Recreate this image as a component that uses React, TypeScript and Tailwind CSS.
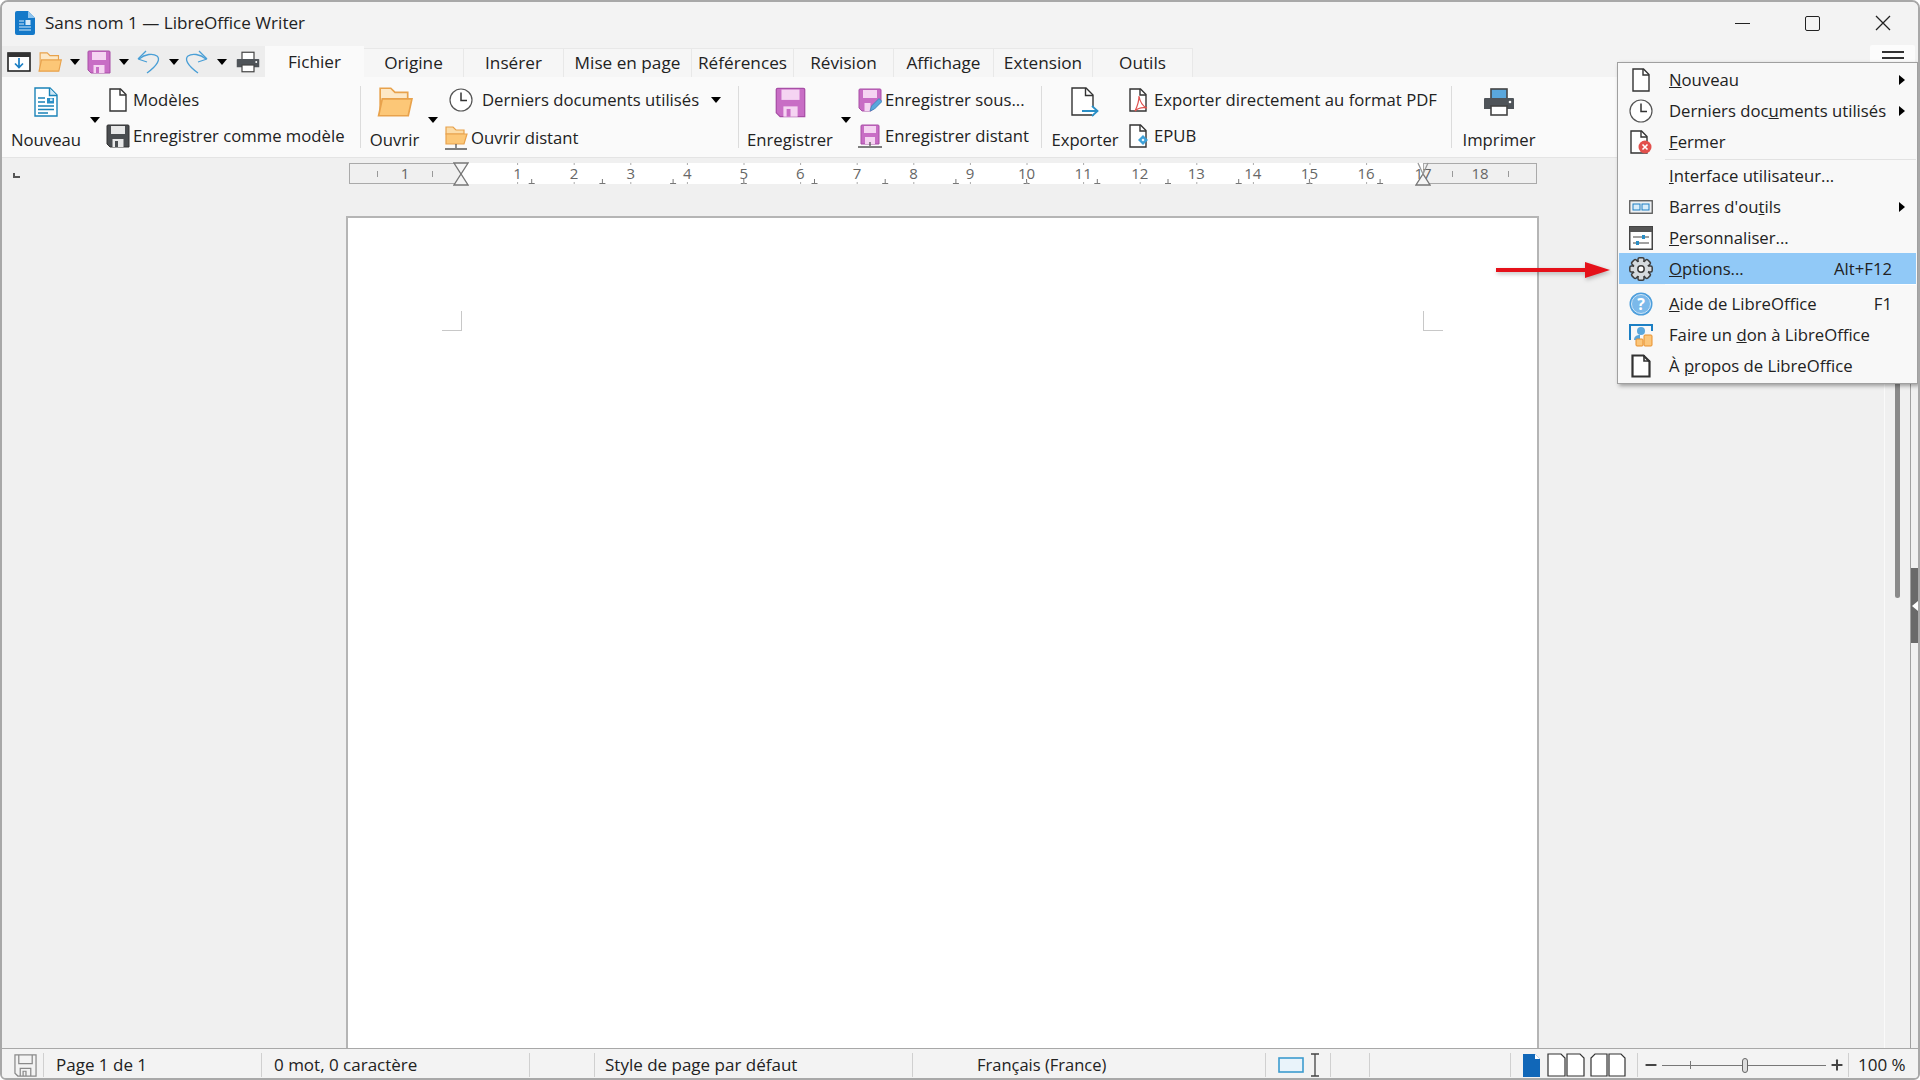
import type { ReactNode } from "react";
import { Minus, Plus } from "lucide-react";

const font = "font-['Open_Sans','Noto_Sans',sans-serif]";

// ---- icons ----

const PageIcon = ({ className = "h-6 w-[18px]", stroke = "#333" }: { className?: string; stroke?: string }) => (
  <svg viewBox="0 0 18 24" className={className} fill="none">
    <path d="M1 1h10.500L17 6.500V23H1z" fill="#fff" stroke={stroke} strokeWidth="1.4" />
    <path d="M11 1v6h6" stroke={stroke} strokeWidth="1.4" />
  </svg>
);

const WriterLogo = () => (
  <svg viewBox="0 0 20 24" className="h-6 w-5">
    <path d="M2 0h11l7 7v15a2 2 0 0 1-2 2H2a2 2 0 0 1-2-2V2a2 2 0 0 1 2-2z" fill="#1479c9" />
    <path d="M13 0l7 7h-7z" fill="#8ec4ee" />
    <path d="M4 10h5M4 13h5M4 16h12M4 19h12" stroke="#d6ebfa" strokeWidth="1.2" />
    <rect x="10.500" y="9" width="5" height="5" fill="#d6ebfa" />
  </svg>
);

const NewDocBig = () => (
  <svg viewBox="0 0 24 30" className="h-[30px] w-6" fill="none">
    <path d="M1 1h15l7 7v21H1z" fill="#fff" stroke="#1a83b8" strokeWidth="1.4" />
    <path d="M15.500 1v7.500H23" fill="#cfe7f5" stroke="#1a83b8" strokeWidth="1.4" />
    <path d="M4 11h7M4 15h7M4 19h16M4 22.500h16M4 26h10" stroke="#1a83b8" strokeWidth="1.3" />
    <rect x="13" y="11" width="7" height="5.500" fill="#2a8fc6" />
    <rect x="16" y="11.500" width="2.500" height="2.500" fill="#cfe7f5" />
  </svg>
);

const Clock = ({ className = "h-6 w-6" }: { className?: string }) => (
  <svg viewBox="0 0 24 24" className={className} fill="none">
    <circle cx="12" cy="12" r="11" fill="#fff" stroke="#555" strokeWidth="1.2" />
    <path d="M12 4.500V12.500H18" stroke="#333" strokeWidth="1.5" />
  </svg>
);

const Folder = ({ className = "h-5 w-6" }: { className?: string }) => (
  <svg viewBox="0 0 34 28" className={className}>
    <path d="M3 27V1h10l4 4h12v7" fill="#fde8c6" stroke="#e8a24c" strokeWidth="1.6" />
    <path d="M1.500 27 5 11h28l-3.500 16z" fill="#fcc777" stroke="#e8a24c" strokeWidth="1.6" />
  </svg>
);

const RemoteFolder = () => (
  <svg viewBox="0 0 24 24" className="h-6 w-6">
    <path d="M2 1h7l3 3h8v4H2z" fill="#fbdca8" stroke="#e8a24c" strokeWidth="1.2" />
    <path d="M2 18V8h21l-3 10z" fill="#fcc777" stroke="#e8a24c" strokeWidth="1.2" />
    <path d="M12 18v4M1 23h22" stroke="#555" strokeWidth="1.3" />
  </svg>
);

const Floppy = ({ className = "h-6 w-6", body = "#c86dc5", inner = "#f5d4f2", edge = "#a84fa6" }: { className?: string; body?: string; inner?: string; edge?: string }) => (
  <svg viewBox="0 0 24 24" className={className}>
    <path d="M1 2a1 1 0 0 1 1-1h20a1 1 0 0 1 1 1v21H4l-3-3z" fill={body} stroke={edge} strokeWidth="1" />
    <rect x="5" y="2" width="14" height="8" fill={inner} />
    <rect x="6.500" y="15" width="11" height="8" fill={inner} />
    <rect x="9" y="17" width="3" height="6" fill={body} />
  </svg>
);

const StatusFloppy = () => (
  <svg viewBox="0 0 24 24" className="h-[23px] w-[23px]" fill="none" stroke="#8a8a8a" strokeWidth="1.300">
    <path d="M1 1h22v22H4l-3-3z" />
    <path d="M5 1v9h14V1M6.500 23v-8h11v8M9.500 23v-5h3v5" />
  </svg>
);

const FloppyEdit = () => (
  <svg viewBox="0 0 24 24" className="h-6 w-6">
    <path d="M1 2a1 1 0 0 1 1-1h20a1 1 0 0 1 1 1v12l-10 9H4l-3-3z" fill="#c86dc5" stroke="#a84fa6" strokeWidth="1" />
    <rect x="5" y="2" width="14" height="8" fill="#f5d4f2" />
    <rect x="6.500" y="15" width="6" height="8" fill="#f5d4f2" />
    <path d="M12 23l1.500-5 7.500-7.500 3 3-7.500 7.500z" fill="#5aa7dc" stroke="#3b83b8" strokeWidth="0.8" />
  </svg>
);

const FloppyRemote = () => (
  <svg viewBox="0 0 24 24" className="h-6 w-6">
    <path d="M3 2a1 1 0 0 1 1-1h16a1 1 0 0 1 1 1v18H3z" fill="#c86dc5" stroke="#a84fa6" strokeWidth="1" />
    <rect x="6" y="2" width="12" height="7" fill="#f5d4f2" />
    <rect x="7" y="13" width="10" height="7" fill="#f5d4f2" />
    <path d="M12 18v4M0 23h24" stroke="#555" strokeWidth="1.3" />
  </svg>
);

const Printer = ({ className = "h-6 w-6", tray = "#fff" }: { className?: string; tray?: string }) => (
  <svg viewBox="0 0 32 28" className={className}>
    <rect x="8" y="1" width="16" height="11" fill={tray} stroke="#444" strokeWidth="1.6" />
    <path d="M2 10h28a1 1 0 0 1 1 1v10H1V11a1 1 0 0 1 1-1z" fill="#4f5459" />
    <circle cx="27" cy="14" r="1.300" fill="#fff" />
    <rect x="8" y="18" width="16" height="9" fill="#fff" stroke="#444" strokeWidth="1.6" />
  </svg>
);

const NewWindowIcon = () => (
  <svg viewBox="0 0 24 20" className="h-5 w-6">
    <rect x="1" y="1" width="22" height="18" fill="#fff" stroke="#222" strokeWidth="1.6" />
    <rect x="1" y="1" width="22" height="4" fill="#333" />
    <path d="M12 6v9M8 11.500l4 4 4-4" fill="none" stroke="#1c7fc4" strokeWidth="1.700" />
  </svg>
);

const Undo = ({ flip = false }: { flip?: boolean }) => (
  <svg viewBox="0 0 24 24" className={flip ? "h-6 w-6 -scale-x-100" : "h-6 w-6"} fill="none" stroke="#4a9fd6" strokeWidth="1.300">
    <path d="M1 9 9 1M1 9l9 3" />
    <path d="M2 9c6-5 14-6 18-3 3.500 3 1 9-10 17" />
  </svg>
);

const ExportIcon = () => (
  <svg viewBox="0 0 28 30" className="h-[30px] w-7" fill="none">
    <path d="M1 1h14l7 7v20H1z" fill="#fff" stroke="#333" strokeWidth="1.4" />
    <path d="M14.500 1v7.500H22" stroke="#333" strokeWidth="1.4" />
    <path d="M11 24h15M21 19l5.500 5-5.500 5" stroke="#2a8fc6" strokeWidth="1.800" fill="#fff" />
  </svg>
);

const PdfIcon = () => (
  <svg viewBox="0 0 20 24" className="h-6 w-5" fill="none">
    <path d="M1 1h10.500L17 6.500V23H1z" fill="#fff" stroke="#333" strokeWidth="1.4" />
    <path d="M11 1v6h6" stroke="#333" strokeWidth="1.4" />
    <path d="M10 8c1 6 3 10 8 12-5-1-9 0-12 3 2-4 4-9 4-15z" stroke="#e0524f" strokeWidth="1.200" fill="#fff" />
  </svg>
);

const EpubIcon = () => (
  <svg viewBox="0 0 20 24" className="h-6 w-5" fill="none">
    <path d="M1 1h10.500L17 6.500V23H1z" fill="#fff" stroke="#333" strokeWidth="1.4" />
    <path d="M11 1v6h6" stroke="#333" strokeWidth="1.4" />
    <path d="M14 11l5 5-5 5-5-5z" fill="#3da0d8" />
    <path d="M14 14.500l1.500 1.500-1.500 1.500-1.500-1.500z" fill="#fff" />
  </svg>
);

const Toolbars = () => (
  <svg viewBox="0 0 24 14" className="h-3.5 w-6">
    <rect x="0.750" y="0.750" width="22.500" height="12.500" fill="#eef1f3" stroke="#555" strokeWidth="1.300" />
    <rect x="4" y="4" width="7" height="6" fill="#d6ebfa" stroke="#1c7fc4" />
    <rect x="13" y="4" width="7" height="6" fill="#d6ebfa" stroke="#1c7fc4" />
  </svg>
);

const Customize = () => (
  <svg viewBox="0 0 24 24" className="h-6 w-6">
    <rect x="0.750" y="0.750" width="22.500" height="22.500" fill="#fff" stroke="#444" strokeWidth="1.500" />
    <rect x="1" y="1" width="22" height="5" fill="#555" />
    <path d="M4 11h16M4 17h16" stroke="#444" strokeWidth="1.200" />
    <rect x="13" y="9" width="3" height="4" fill="#2a8fc6" />
    <rect x="7" y="15" width="3" height="4" fill="#2a8fc6" />
  </svg>
);

// eight blunt teeth, dark outline, pale hub
const Gear = () => (
  <svg viewBox="0 0 24 24" className="h-6 w-6" stroke="#3d3d3d" strokeWidth="1.500">
    <g fill="#d5dade">
      {[0, 45, 90, 135, 180, 225, 270, 315].map((angle) => (
        <rect key={angle} x="9" y="0.800" width="6" height="6" rx="1.500" transform={`rotate(${angle} 12 12)`} />
      ))}
    </g>
    <circle cx="12" cy="12" r="7.500" fill="#d5dade" stroke="none" />
    <circle cx="12" cy="12" r="3.200" fill="#fff" />
  </svg>
);

const Help = () => (
  <svg viewBox="0 0 24 24" className="h-6 w-6">
    <circle cx="12" cy="12" r="11.500" fill="#4c9edc" />
    <circle cx="12" cy="12" r="9.500" fill="#7bb9ea" stroke="#cfe5f7" strokeWidth="1" />
    <text x="12" y="18" textAnchor="middle" fontSize="16" fontWeight="700" fill="#fff" fontFamily="Open Sans">?</text>
  </svg>
);

const Donate = () => (
  <svg viewBox="0 0 24 24" className="h-6 w-6">
    <path d="M1 17V2h22v6" fill="none" stroke="#1c7fc4" strokeWidth="2" />
    <circle cx="12" cy="8" r="4" fill="#5aa7dc" />
    <path d="M5 17c0-4 3-5 6-5v5z" fill="#5aa7dc" />
    <rect x="7" y="16" width="7" height="7" rx="1" fill="#fbc67b" stroke="#e8902c" />
    <rect x="15" y="12" width="8" height="11" rx="1" fill="#fbc67b" stroke="#e8902c" />
  </svg>
);

const AboutLogo = () => (
  <svg viewBox="0 0 20 24" className="h-6 w-5" fill="none" stroke="#333" strokeWidth="2.200">
    <path d="M1.500 1.500h11l6 6v15h-17z" fill="#fff" />
    <path d="M13 1v6h6" strokeWidth="1.600" />
  </svg>
);

const CloseDoc = () => (
  <svg viewBox="0 0 22 24" className="h-6 w-[22px]">
    <path d="M1 1h10.500L17 6.500V23H1z" fill="#fff" stroke="#333" strokeWidth="1.4" />
    <path d="M11 1v6h6" fill="none" stroke="#333" strokeWidth="1.4" />
    <circle cx="15" cy="17" r="6.500" fill="#e2504c" />
    <path d="M12.500 14.500l5 5M17.500 14.500l-5 5" stroke="#fff" strokeWidth="1.600" />
  </svg>
);

const DropArrow = () => (
  <span className="block h-0 w-0 border-x-[5px] border-t-[6px] border-x-transparent border-t-black" />
);

// ---- ribbon ----

const LargeButton = ({ icon, label, width }: { icon: ReactNode; label: string; width: string }) => (
  <div className={`flex shrink-0 flex-col items-center pt-[10px] ${width}`}>
    <div className="flex h-[30px] items-center">{icon}</div>
    <div className="mt-[11px] h-6 whitespace-nowrap leading-6">{label}</div>
  </div>
);

const ArrowCol = () => (
  <div className="flex w-[10px] shrink-0 justify-center pt-[40px]">
    <DropArrow />
  </div>
);

const Sep = () => <div className="mt-[9px] h-[62px] w-px shrink-0 bg-[#dcdcdc]" />;

const SmallRow = ({ icon, label, boxClass = "w-6 mr-[3px]", extra }: { icon: ReactNode; label: string; boxClass?: string; extra?: ReactNode }) => (
  <div className="flex h-6 items-center whitespace-nowrap">
    <div className={`flex shrink-0 items-center justify-center ${boxClass}`}>{icon}</div>
    <span>{label}</span>
    {extra}
  </div>
);

const tabs = [
  { label: "Origine", width: "w-[100px]" },
  { label: "Insérer", width: "w-[100px]" },
  { label: "Mise en page", width: "w-[128px]" },
  { label: "Références", width: "w-[102px]" },
  { label: "Révision", width: "w-[100px]" },
  { label: "Affichage", width: "w-[100px]" },
  { label: "Extension", width: "w-[99px]" },
  { label: "Outils", width: "w-[100px]" },
];

const Ruler = () => {
  const marks: ReactNode[] = [];
  for (let i = 1; i <= 33; i++) {
    marks.push(
      <div key={i} className="flex w-0 justify-center">
        {i % 2 === 0 ? <span>{i / 2}</span> : <span className="h-[6px] w-px bg-[#999]" />}
      </div>,
    );
  }
  const tabStops = Array.from({ length: 13 }, (_, i) => 70.7 * (i + 1));
  const cmTicks = Array.from({ length: 16 }, (_, i) => 56.6 * (i + 1));

  return (
    <div className="flex h-[21px] w-[1188px] shrink-0 text-[15px] text-[#666]">
      <div className="flex w-[112px] items-center justify-evenly border border-[#aaa]">
        <span className="h-[6px] w-px bg-[#999]" />
        <div className="flex w-0 justify-center">1</div>
        <span className="h-[6px] w-px bg-[#999]" />
      </div>
      <div className="relative flex w-[962px] items-center justify-evenly bg-white">
        {marks}
        <span className="absolute right-0 translate-x-1/2">17</span>
        <svg className="absolute left-0 top-0 h-[21px] w-[962px]" viewBox="0 0 962 21" fill="none" stroke="#777">
          {tabStops.map((x) => (
            <path key={x} d={`M${x} 16v4M${x - 3} 20.500h6`} />
          ))}
          {cmTicks.map((x) => (
            <path key={x} d={`M${x} 0v2M${x} 19v2`} stroke="#aaa" />
          ))}
        </svg>
        <svg className="absolute -left-[8px] -top-px h-[24px] w-[16px]" viewBox="0 0 16 24" fill="#f5f5f5" stroke="#777" strokeWidth="1.300">
          <path d="M1 1h14L8 12z" />
          <path d="M1 23h14L8 12z" />
        </svg>
        <svg className="absolute -right-[8px] -top-px h-[24px] w-[16px]" viewBox="0 0 16 24" fill="none" stroke="#777" strokeWidth="1.300">
          <path d="M1 23h14L8 12z" fill="#f5f5f5" />
          <path d="M3 1 8 12 13 1" stroke="#999" />
        </svg>
      </div>
      <div className="flex w-[114px] items-center justify-evenly border border-[#aaa]">
        <span className="h-[6px] w-px bg-[#999]" />
        <div className="flex w-0 justify-center">18</div>
        <span className="h-[6px] w-px bg-[#999]" />
      </div>
    </div>
  );
};

// ---- menu ----

const MenuRow = ({ icon, children, shortcut, sub, active }: { icon?: ReactNode; children: ReactNode; shortcut?: string; sub?: boolean; active?: boolean }) => (
  <div className={`flex h-[31px] items-center pr-[24px] ${active ? "bg-[#91c9f7]" : ""}`}>
    <div className="mr-[6px] flex w-[44px] shrink-0 items-center justify-center">{icon}</div>
    <div className="flex-1 whitespace-nowrap">{children}</div>
    {shortcut && <span>{shortcut}</span>}
    {sub && <span className="-mr-[13px] h-0 w-0 border-y-[5px] border-l-[6px] border-y-transparent border-l-black" />}
  </div>
);

const AppMenu = () => (
  <div className="absolute left-[1615px] top-[60px] w-[301px] border border-[#a0a0a0] bg-[#f8f8f8] px-px pb-[2px] pt-[1px] shadow-[2px_2px_4px_rgba(0,0,0,0.35)]">
    <MenuRow icon={<PageIcon />} sub>
      <u>N</u>ouveau
    </MenuRow>
    <MenuRow icon={<Clock />} sub>
      Derniers doc<u>u</u>ments utilisés
    </MenuRow>
    <MenuRow icon={<CloseDoc />}>
      <u>F</u>ermer
    </MenuRow>
    <div className="ml-[46px] h-[3px] border-b border-[#e2e2e2]" />
    <MenuRow>
      <u>I</u>nterface utilisateur...
    </MenuRow>
    <MenuRow icon={<Toolbars />} sub>
      Barres d'ou<u>t</u>ils
    </MenuRow>
    <MenuRow icon={<Customize />}>
      <u>P</u>ersonnaliser...
    </MenuRow>
    <MenuRow icon={<Gear />} shortcut="Alt+F12" active>
      <u>O</u>ptions...
    </MenuRow>
    <div className="ml-[46px] h-[4px] border-t border-white" />
    <MenuRow icon={<Help />} shortcut="F1">
      <u>A</u>ide de LibreOffice
    </MenuRow>
    <MenuRow icon={<Donate />}>
      Faire un <u>d</u>on à LibreOffice
    </MenuRow>
    <MenuRow icon={<AboutLogo />}>
      À <u>p</u>ropos de LibreOffice
    </MenuRow>
  </div>
);

// ---- status bar ----

const StatusSep = ({ className = "" }: { className?: string }) => <div className={`h-[24px] w-px shrink-0 bg-[#d0d0d0] ${className}`} />;

const StatusBar = () => (
  <div className="flex h-[30px] shrink-0 items-center whitespace-nowrap border-t border-[#a8a8a8] bg-[#f3f3f3] pt-[3px] text-[17px]">
    <div className="ml-3 flex w-[29px] shrink-0 items-center">
      <StatusFloppy />
    </div>
    <StatusSep />
    <div className="w-[217px] shrink-0 pl-3">Page 1 de 1</div>
    <StatusSep />
    <div className="w-[267px] shrink-0 pl-3">0 mot, 0 caractère</div>
    <StatusSep />
    <div className="w-[64px] shrink-0" />
    <StatusSep />
    <div className="w-[317px] shrink-0 pl-[10px]">Style de page par défaut</div>
    <StatusSep />
    <div className="w-[352px] shrink-0 pl-[64px] text-[16.5px]">Français (France)</div>
    <StatusSep />
    <div className="flex w-[64px] shrink-0 items-center pl-3">
      <svg viewBox="0 0 26 16" className="h-4 w-[26px]">
        <rect x="1" y="1" width="24" height="14" fill="#e9f3fa" stroke="#3d9ccf" strokeWidth="1.600" />
      </svg>
      <svg viewBox="0 0 10 24" className="ml-[6px] h-6 w-[10px]" fill="none" stroke="#444" strokeWidth="1.300">
        <path d="M1 1h8M5 1v22M1 23h8" />
      </svg>
    </div>
    <StatusSep />
    <div className="w-[38px] shrink-0" />
    <StatusSep />
    <div className="w-[140px] shrink-0" />
    <StatusSep />
    <div className="flex w-[126px] shrink-0 items-center pl-3">
      <svg viewBox="0 0 17 24" className="h-6 w-[17px]">
        <path d="M0 1h12l5 5v18H0z" fill="#1167b8" />
        <path d="M12 1l5 5h-5z" fill="#fff" />
      </svg>
      <svg viewBox="0 0 38 24" className="ml-[7px] h-6 w-[38px]" fill="#fff" stroke="#333" strokeWidth="1.200">
        <path d="M1 1h13l4 4v18H1zM20 1h13l4 4v18H20z" />
      </svg>
      <svg viewBox="0 0 36 24" className="ml-[5px] h-6 w-9" fill="#fff" stroke="#333" strokeWidth="1.200">
        <path d="M17 1H5L1 5v18h16zM19 1h12l4 4v18H19z" />
      </svg>
    </div>
    <StatusSep />
    <div className="flex w-[210px] shrink-0 items-center pl-[5px]">
      <Minus className="h-4 w-4 text-[#444]" strokeWidth={3} />
      <div className="relative mx-[3px] flex h-4 w-[164px] items-center">
        <div className="h-px w-full bg-[#777]" />
        <span className="absolute left-[28px] h-[8px] w-px bg-[#777]" />
        <span className="absolute left-[80px] h-[15px] w-[6px] rounded-sm border border-[#666] bg-[#ddd]" />
      </div>
      <Plus className="h-4 w-4 text-[#444]" strokeWidth={3} />
    </div>
    <StatusSep />
    <div className="pl-[9px]">100 %</div>
  </div>
);

export default function App() {
  return (
    <div className={`relative flex h-[1080px] w-[1920px] flex-col overflow-hidden rounded-t-lg rounded-b-md border-x-2 border-y-2 border-[#a8a8a8] bg-[#f3f3f3] text-[16.7px] text-[#222] ${font}`}>
      {/* title bar */}
      <div className="flex h-[44px] shrink-0 items-center bg-[#f3f3f3] pb-[2px]">
        <div className="ml-[13px] mr-[10px]">
          <WriterLogo />
        </div>
        <span className="text-[17.1px]">Sans nom 1 — LibreOffice Writer</span>
        <div className="ml-auto flex items-center text-[#222]">
          <span className="h-px w-[15px] bg-[#222]" />
          <span className="ml-[55px] h-[15px] w-[15px] rounded-[2px] border-[1.5px] border-[#222]" />
          <svg viewBox="0 0 16 16" className="ml-[55px] mr-[27px] h-4 w-4" fill="none" stroke="#222" strokeWidth="1.300">
            <path d="M1 1l14 14M15 1 1 15" />
          </svg>
        </div>
      </div>

      {/* tabs row */}
      <div className="flex h-[31px] shrink-0 items-stretch text-[17.2px]">
        <div className="flex w-[263px] shrink-0 items-center bg-[#ededed]">
          <div className="ml-[5px]"><NewWindowIcon /></div>
          <div className="ml-[7px]"><Folder className="h-5 w-6" /></div>
          <div className="ml-2 flex w-[10px] justify-center"><DropArrow /></div>
          <div className="ml-[7px]"><Floppy /></div>
          <div className="ml-2 flex w-[10px] justify-center"><DropArrow /></div>
          <div className="ml-2"><Undo /></div>
          <div className="ml-2 flex w-[10px] justify-center"><DropArrow /></div>
          <div className="ml-[5px]"><Undo flip /></div>
          <div className="ml-[9px] flex w-[10px] justify-center"><DropArrow /></div>
          <div className="ml-[9px]"><Printer /></div>
        </div>
        <div className="flex w-[99px] shrink-0 items-center justify-center bg-[#fafafa]">Fichier</div>
        {tabs.map((tab) => (
          <div key={tab.label} className={`mt-[2px] flex shrink-0 items-center justify-center border-r border-t border-[#e8e8e8] bg-[#f6f6f6] ${tab.width}`}>
            {tab.label}
          </div>
        ))}
        <div className="relative flex-1">
          <div className="absolute right-[3px] -top-[1px] flex h-[20px] w-[45px] flex-col items-center gap-[4px] rounded-t-[2px] bg-[#fcfcfc] pt-[6px]">
            <span className="h-[2px] w-[22px] bg-[#333]" />
            <span className="h-[2px] w-[22px] bg-[#333]" />
          </div>
        </div>
      </div>

      {/* ribbon */}
      <div className="flex h-[81px] shrink-0 border-b border-[#e4e4e4] bg-[#fafafa]">
        <LargeButton icon={<NewDocBig />} label="Nouveau" width="w-[88px]" />
        <ArrowCol />
        <div className="ml-[6px] flex w-[254px] shrink-0 flex-col gap-3 pt-[11px]">
          <SmallRow icon={<PageIcon />} label="Modèles" />
          <SmallRow icon={<Floppy body="#4a4d50" inner="#e8e8e8" edge="#333" />} label="Enregistrer comme modèle" />
        </div>
        <Sep />

        <LargeButton icon={<Folder className="h-[30px] w-9" />} label="Ouvrir" width="w-[67px]" />
        <ArrowCol />
        <div className="ml-[6px] flex w-[294px] shrink-0 flex-col gap-[14px] pt-[11px]">
          <SmallRow
            icon={<Clock />}
            label="Derniers documents utilisés"
            boxClass="w-6 ml-[5px] mr-[9px]"
            extra={<span className="ml-[12px]"><DropArrow /></span>}
          />
          <SmallRow icon={<RemoteFolder />} label="Ouvrir distant" />
        </div>
        <Sep />

        <LargeButton icon={<Floppy className="h-[31px] w-[31px]" />} label="Enregistrer" width="w-[102px]" />
        <ArrowCol />
        <div className="ml-[7px] flex w-[183px] shrink-0 flex-col gap-3 pt-[11px]">
          <SmallRow icon={<FloppyEdit />} label="Enregistrer sous..." />
          <SmallRow icon={<FloppyRemote />} label="Enregistrer distant" />
        </div>
        <Sep />

        <LargeButton icon={<ExportIcon />} label="Exporter" width="w-[86px]" />
        <div className="flex w-[323px] shrink-0 flex-col gap-3 pl-px pt-[11px]">
          <SmallRow icon={<PdfIcon />} label="Exporter directement au format PDF" boxClass="w-5 mr-[5px]" />
          <SmallRow icon={<EpubIcon />} label="EPUB" boxClass="w-5 mr-[5px]" />
        </div>
        <Sep />

        <LargeButton icon={<Printer className="h-7 w-8" tray="#5aa7dc" />} label="Imprimer" width="w-[94px]" />
      </div>

      {/* document area */}
      <div className="flex min-h-0 flex-1 bg-[#f0f0f0]">
        <div className="flex min-w-0 flex-1 flex-col overflow-hidden pt-[5px]">
          <div className="flex shrink-0">
            <div className="flex w-[347px] shrink-0 items-center pl-[11px]">
              <span className="mt-1 h-[5px] w-[7px] border-b-2 border-l-2 border-[#555]" />
            </div>
            <Ruler />
          </div>
          <div className="ml-[344px] mt-[32px] w-[1193px] flex-1 border-x-2 border-t-2 border-[#b5b5b5] bg-white">
            <div className="flex justify-between px-[94px] pt-[93px]">
              <span className="h-[20px] w-[20px] border-b border-r border-[#c8c8c8]" />
              <span className="h-[20px] w-[20px] border-b border-l border-[#c8c8c8]" />
            </div>
          </div>
        </div>
        <div className="w-px shrink-0 bg-[#fafafa]" />
        <div className="flex w-[25px] shrink-0 justify-center pr-[5px]">
          <div className="ml-[5px] h-[440px] w-[5px] rounded-b-sm bg-[#8a8a8a]" />
        </div>
        <div className="w-px shrink-0 bg-[#a0a0a0]" />
        <div className="w-[7px] shrink-0 pt-[410px]">
          <div className="relative flex h-[75px] items-center justify-center bg-[#6a6a6a]">
            <span className="h-0 w-0 border-y-[5px] border-r-[6px] border-y-transparent border-r-white" />
          </div>
        </div>
      </div>

      <StatusBar />

      <AppMenu />

      {/* red arrow pointing at Options */}
      <svg className="absolute left-[1494px] top-[258px] h-5 w-[115px] drop-shadow-[1px_2px_2px_rgba(0,0,0,0.25)]" viewBox="0 0 115 20">
        <path d="M0 8h89V2l25 8-25 8v-6H0z" fill="#e5111a" />
      </svg>
    </div>
  );
}
